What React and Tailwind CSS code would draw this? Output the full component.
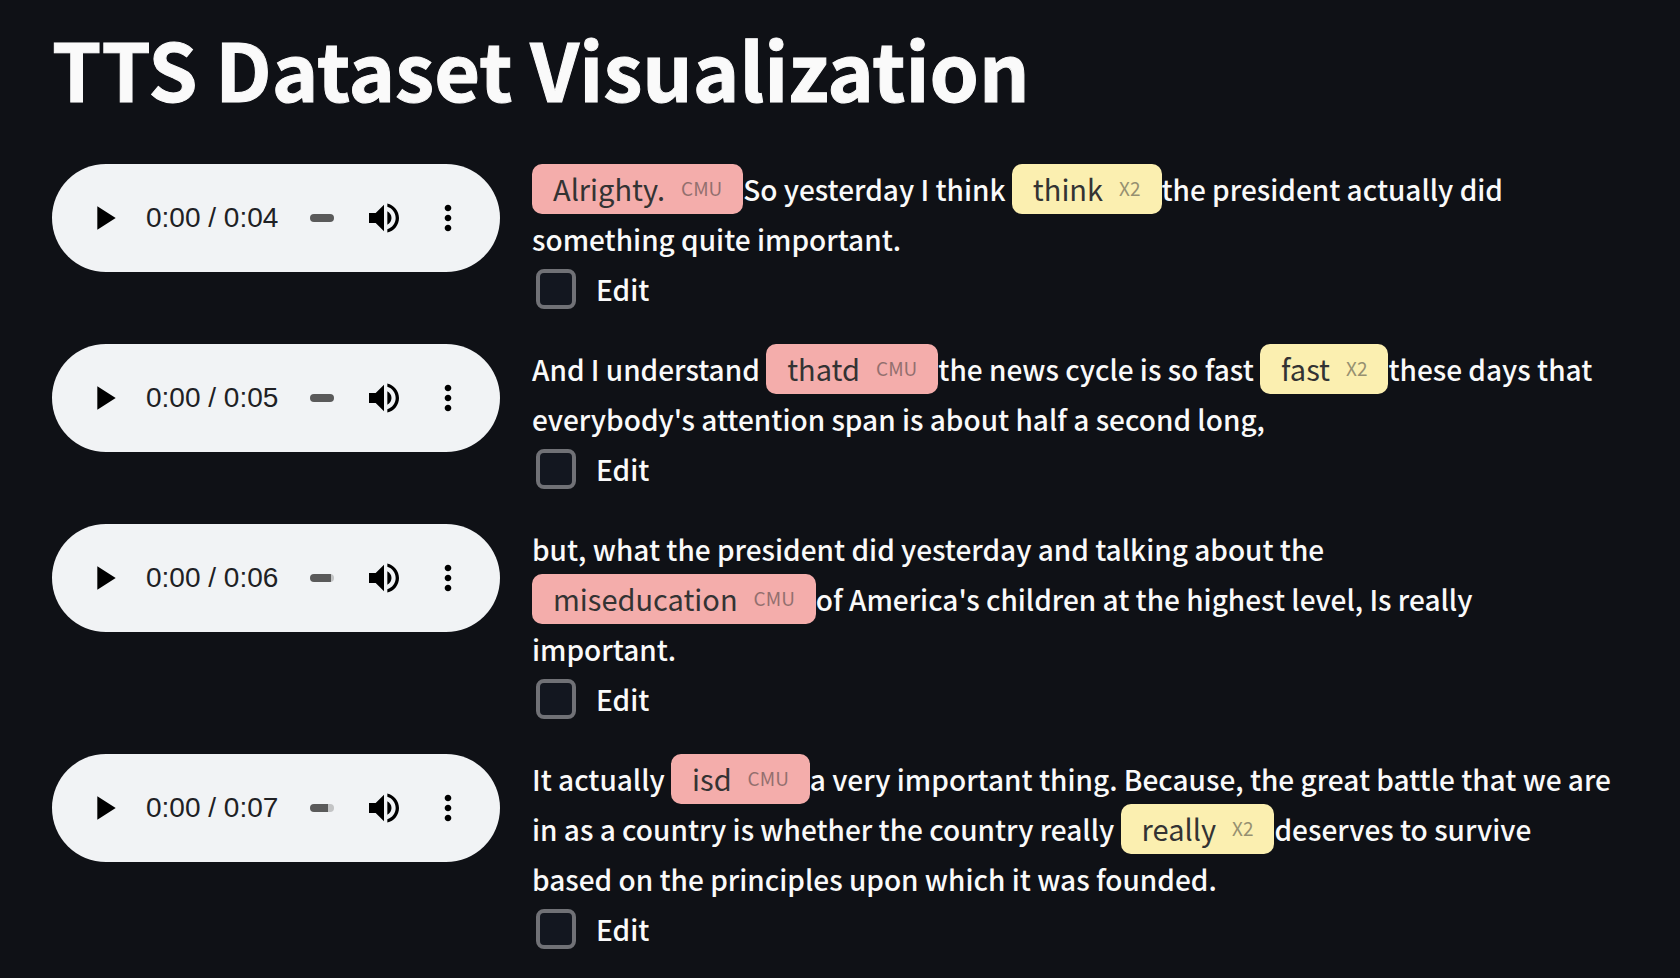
import React from "react";

const MARKS = {
  CMU: "bg-[#f4adab]",
  X2: "bg-[#fbefb0]",
};

function Mark({ word, tag }) {
  return (
    <span className={`inline-flex h-[50px] items-center gap-4 rounded-[10px] px-[21px] pb-0.5 align-top font-normal text-[#333333] ${MARKS[tag]}`}>
      <span className="text-[29px]">{word}</span>
      <span className="text-[19px]">
        <span className="opacity-50">{tag}</span>
      </span>
    </span>
  );
}

function Player({ duration, buffered }) {
  return (
    <div className="flex h-[108px] items-center rounded-full bg-[#f1f3f5] px-8 text-black">
      <button type="button" aria-label="Play" className="shrink-0">
        <svg viewBox="0 0 24 24" className="size-10" fill="currentColor">
          <path d="M8 5v14l11-7z" />
        </svg>
      </button>
      <span className="ml-[22px] whitespace-nowrap font-['Liberation_Sans',Arial,sans-serif] text-[28px] leading-10 font-normal text-[#202124]">
        0:00 / {duration}
      </span>
      <input
        type="range"
        aria-label="Seek"
        min="0"
        max="100"
        defaultValue="0"
        className="ml-8 h-2 w-0 min-w-0 flex-1 appearance-none rounded-full bg-[#c3c4c5] [&::-webkit-slider-thumb]:w-0 [&::-webkit-slider-thumb]:appearance-none"
        style={{
          backgroundImage: "linear-gradient(#5a5a5a, #5a5a5a)",
          backgroundSize: `${buffered}% 100%`,
          backgroundRepeat: "no-repeat",
        }}
      />
      <button type="button" aria-label="Mute" className="ml-[30px] shrink-0">
        <svg viewBox="0 0 24 24" className="size-10" fill="currentColor">
          <path d="M3 9v6h4l5 5V4L7 9H3zm13.5 3c0-1.77-1.02-3.29-2.5-4.03v8.05c1.48-.73 2.5-2.25 2.5-4.02zM14 3.23v2.06c2.89.86 5 3.54 5 6.71s-2.11 5.85-5 6.71v2.06c4.01-.91 7-4.49 7-8.77s-2.99-7.86-7-8.77z" />
        </svg>
      </button>
      <button type="button" aria-label="More options" className="ml-6 shrink-0">
        <svg viewBox="0 0 24 24" className="size-10" fill="currentColor">
          <path d="M12 8c1.1 0 2-.9 2-2s-.9-2-2-2-2 .9-2 2 .9 2 2 2zm0 2c-1.1 0-2 .9-2 2s.9 2 2 2 2-.9 2-2-.9-2-2-2zm0 6c-1.1 0-2 .9-2 2s.9 2 2 2 2-.9 2-2-.9-2-2-2z" />
        </svg>
      </button>
    </div>
  );
}

const CLIPS = [
  {
    duration: "0:04",
    buffered: 100,
    text: (
      <>
        <Mark word="Alrighty." tag="CMU" />
        So yesterday I think <Mark word="think" tag="X2" />
        the president actually did something quite important.
      </>
    ),
  },
  {
    duration: "0:05",
    buffered: 100,
    text: (
      <>
        And I understand <Mark word="thatd" tag="CMU" />
        the news cycle is so fast <Mark word="fast" tag="X2" />
        these days that everybody's attention span is about half a second long,
      </>
    ),
  },
  {
    duration: "0:06",
    buffered: 88,
    text: (
      <>
        but, what the president did yesterday and talking about the{" "}
        <span className="whitespace-nowrap">
          <Mark word="miseducation" tag="CMU" />
          of
        </span>{" "}
        America's children at the highest level, Is really important.
      </>
    ),
  },
  {
    duration: "0:07",
    buffered: 75,
    text: (
      <>
        It actually <Mark word="isd" tag="CMU" />
        a very important thing. Because, the great battle that we are in as a country is whether the
        country really <Mark word="really" tag="X2" />
        deserves to survive based on the principles upon which it was founded.
      </>
    ),
  },
];

export default function App() {
  return (
    <main className="min-h-screen bg-[#0f1116] pt-4 pr-[60px] pb-[14px] pl-[52px] font-['Noto_Sans_CJK_SC',sans-serif] text-[28px] leading-[50px] font-medium text-[#fafafa]">
      <h1 className="text-[79px] leading-[104px] font-bold [-webkit-text-stroke:1px]">
        TTS Dataset Visualization
      </h1>
      <div className="mt-11 flex flex-col gap-[30px]">
        {CLIPS.map((clip) => (
          <section key={clip.duration} className="grid grid-cols-[7fr_17fr] gap-8">
            <Player duration={clip.duration} buffered={clip.buffered} />
            <div>
              <p className="pr-1.5">{clip.text}</p>
              <label className="ml-1 flex w-fit items-center gap-5">
                <input
                  type="checkbox"
                  className="size-10 appearance-none rounded-lg border-4 border-[#707176] bg-[#131720] checked:bg-[#ff4b4b]"
                />
                Edit
              </label>
            </div>
          </section>
        ))}
      </div>
    </main>
  );
}
